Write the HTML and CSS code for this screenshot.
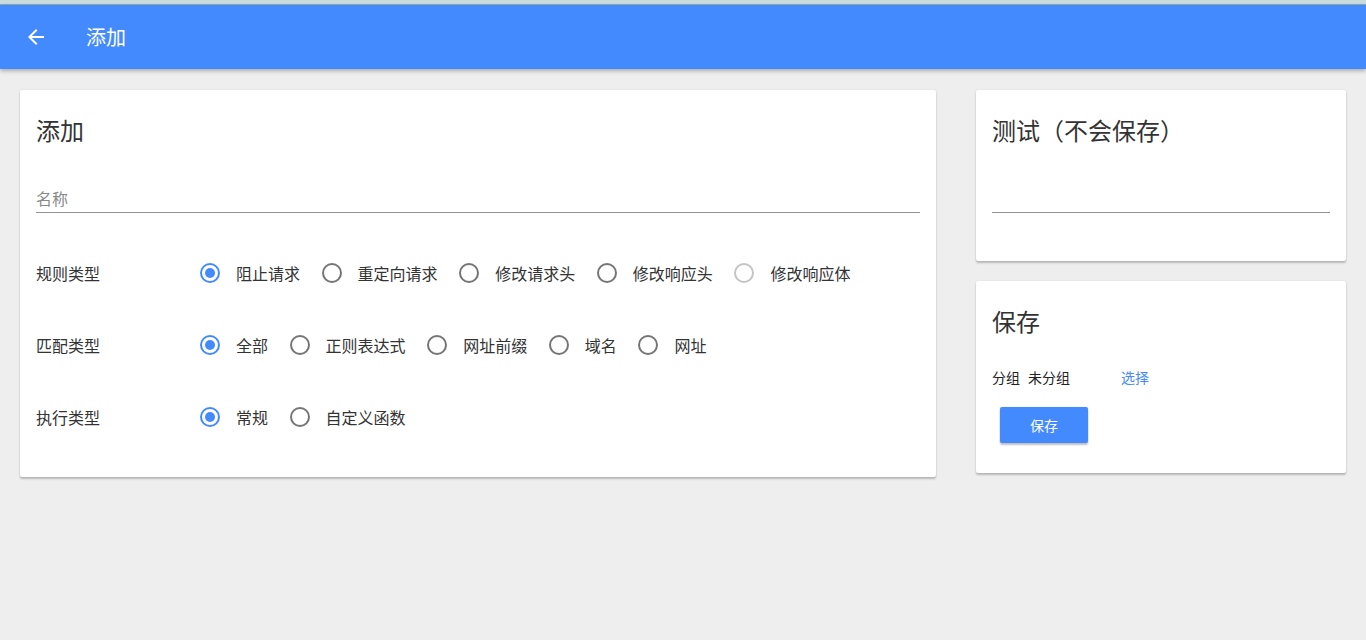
FILE: index.html
```html
<!DOCTYPE html>
<html lang="zh">
<head>
<meta charset="utf-8">
<title>添加</title>
<link rel="stylesheet" href="styles.css">
</head>
<body>
<div class="topstrip"></div>
<header class="appbar">
  <svg class="back" viewBox="0 0 24 24" width="24" height="24"><path fill="#fff" d="M20 11H7.830l5.59-5.59L12 4l-8 8 8 8 1.41-1.41L7.83 13H20v-2z"/></svg>
  <span class="appbar-title">添加</span>
</header>
<main class="content">
  <section class="card main-card">
    <h2 class="card-title">添加</h2>
    <div class="field"><span class="placeholder">名称</span></div>
    <div class="rows">
      <div class="row">
        <div class="row-label">规则类型</div>
        <div class="radios">
          <span class="radio checked"><i></i>阻止请求</span>
          <span class="radio"><i></i>重定向请求</span>
          <span class="radio"><i></i>修改请求头</span>
          <span class="radio"><i></i>修改响应头</span>
          <span class="radio disabled"><i></i>修改响应体</span>
        </div>
      </div>
      <div class="row">
        <div class="row-label">匹配类型</div>
        <div class="radios">
          <span class="radio checked"><i></i>全部</span>
          <span class="radio"><i></i>正则表达式</span>
          <span class="radio"><i></i>网址前缀</span>
          <span class="radio"><i></i>域名</span>
          <span class="radio"><i></i>网址</span>
        </div>
      </div>
      <div class="row">
        <div class="row-label">执行类型</div>
        <div class="radios">
          <span class="radio checked"><i></i>常规</span>
          <span class="radio"><i></i>自定义函数</span>
        </div>
      </div>
    </div>
  </section>
  <aside class="side">
    <section class="card test-card">
      <h2 class="card-title">测试（不会保存）</h2>
      <div class="field"><span class="placeholder"></span></div>
    </section>
    <section class="card save-card">
      <h2 class="card-title">保存</h2>
      <div class="group-line">
        <span class="group-label">分组</span>
        <span class="group-value">未分组</span>
        <a class="choose">选择</a>
      </div>
      <button class="btn">保存</button>
    </section>
  </aside>
</main>
</body>
</html>
```
FILE: styles.css
```css
* { box-sizing: border-box; }
html, body { margin: 0; padding: 0; }
body {
  background: #eeeeee;
  font-family: "Noto Sans CJK SC", "Noto Sans", sans-serif;
  color: rgba(0,0,0,0.87);
  height: 640px;
  overflow: hidden;
}
.topstrip {
  height: 5px;
  background: #c9dbdd;
  border-bottom: 1px solid #93a6aa;
}
.appbar {
  height: 64px;
  background: #448aff;
  display: flex;
  align-items: center;
  padding-left: 24px;
  box-shadow: 0 2px 4px rgba(0,0,0,0.28);
  position: relative;
  z-index: 1;
}
.back { display: block; }
.appbar-title {
  color: #fff;
  font-size: 20px;
  margin-left: 38px;
  line-height: 24px;
}
.content {
  display: flex;
  align-items: flex-start;
  gap: 40px;
  padding: 21px 20px;
}
.card {
  background: #fff;
  border-radius: 2px;
  box-shadow: 0 2px 2px rgba(0,0,0,0.22), 0 0 2px rgba(0,0,0,0.10);
  padding: 16px;
}
.main-card { width: 916px; padding-bottom: 24px; }
.side { width: 370px; display: flex; flex-direction: column; gap: 20px; }
.card-title {
  margin: 0;
  font-size: 24px;
  font-weight: 400;
  line-height: 48px;
  color: #333;
}
.field {
  padding-top: 32px;
  padding-bottom: 2px;
  border-bottom: 1px solid #949494;
  height: 59px;
}
.placeholder {
  display: block;
  font-size: 16px;
  line-height: 24px;
  color: #8a8a8a;
}
.rows { margin-top: 24px; }
.row {
  height: 72px;
  display: flex;
  align-items: center;
}
.row-label {
  width: 164px;
  font-size: 16px;
  color: #333;
}
.radios { display: flex; align-items: center; gap: 21.6px; }
.radio {
  display: flex;
  align-items: center;
  font-size: 16px;
  color: #333;
  line-height: 24px;
}
.radio i {
  width: 20px;
  height: 20px;
  border-radius: 50%;
  border: 2px solid #757575;
  margin-right: 16px;
  position: relative;
  flex: none;
}
.radio.checked i { border-color: #448aff; }
.radio.checked i::after {
  content: "";
  position: absolute;
  left: 3px; top: 3px;
  width: 10px; height: 10px;
  border-radius: 50%;
  background: #448aff;
}
.radio.disabled i { border-color: #c4c4c4; }
.test-card { padding-bottom: 48px; }
.save-card { padding-bottom: 30px; }
.group-line {
  margin-top: 22px;
  display: flex;
  align-items: center;
  font-size: 14px;
  line-height: 20px;
  color: #222;
}
.group-value { margin-left: 8px; }
.choose { margin-left: 51px; color: #448aff; cursor: pointer; }
.btn {
  margin-top: 20px;
  margin-left: 8px;
  width: 88px;
  height: 36px;
  border: none;
  border-radius: 2px;
  background: #448aff;
  color: #fff;
  font-family: inherit;
  font-size: 14px;
  box-shadow: 0 2px 2px rgba(0,0,0,0.24), 0 0 2px rgba(0,0,0,0.12);
  display: block;
}
```
